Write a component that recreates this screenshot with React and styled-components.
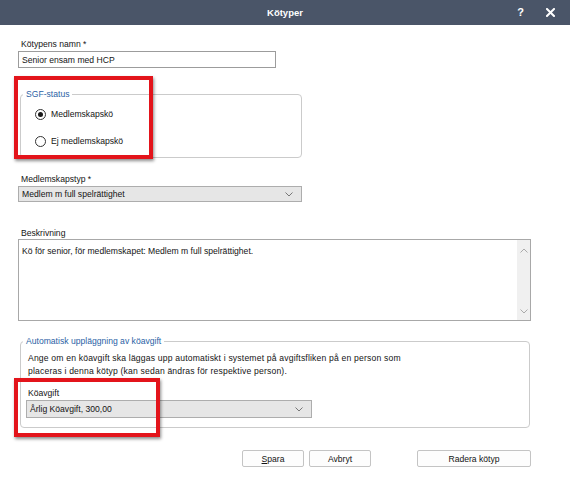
import React from "react";
import styled, { createGlobalStyle } from "styled-components";

const Global = createGlobalStyle`
  html, body { margin: 0; padding: 0; background: #ffffff; }
  body {
    font-family: "Liberation Sans", Arial, sans-serif;
    font-size: 8.6px;
    color: #141414;
  }
  * { box-sizing: border-box; }
`;

const Dialog = styled.div`
  position: relative;
  width: 570px;
  height: 487px;
  overflow: hidden;
  background: #ffffff;
`;

const TitleBar = styled.div`
  height: 25px;
  background: #4a5568;
  display: grid;
  grid-template-columns: 1fr auto 1fr;
  align-items: center;
  color: #ffffff;
`;

const Title = styled.div`
  grid-column: 2;
  font-weight: bold;
  font-size: 9.5px;
`;

const TitleActions = styled.div`
  grid-column: 3;
  display: flex;
  justify-content: flex-end;
  align-items: center;
  gap: 22px;
  padding-right: 15px;
`;

const Help = styled.span`
  font-weight: bold;
  font-size: 11px;
  line-height: 1;
`;

const Body = styled.div`
  padding: 13px 39px 0 18px;
  display: flex;
  flex-direction: column;
`;

const FieldLabel = styled.div`
  line-height: 12px;
  height: 12px;
  padding-left: ${(p) => p.$indent ?? 3}px;
  margin-top: ${(p) => p.$top ?? 0}px;
  margin-bottom: ${(p) => p.$bottom ?? 1}px;
`;

const TextInput = styled.div`
  width: 258px;
  height: 17px;
  border: 1px solid #9c9c9c;
  padding: 0 3px;
  display: flex;
  align-items: center;
`;

const Group = styled.fieldset`
  margin: ${(p) => p.$top}px 0 0 2px;
  padding: 0;
  width: ${(p) => p.$width}px;
  height: ${(p) => p.$height}px;
  border: 1px solid #cbcbcb;
  border-radius: 4px;
  min-width: 0;
`;

const Legend = styled.legend`
  margin-left: 2px;
  padding: 0 3px;
  line-height: 12px;
  color: #2b5fa5;
`;

const RadioList = styled.div`
  display: flex;
  flex-direction: column;
  gap: 13px;
  padding: 7px 0 0 14px;
`;

const RadioRow = styled.label`
  display: flex;
  align-items: center;
  gap: 5px;
  height: 14px;
`;

const RadioDot = styled.span`
  width: 11px;
  height: 11px;
  border-radius: 50%;
  border: 1px solid #333333;
  background: #ffffff;
  display: flex;
  align-items: center;
  justify-content: center;
  &::after {
    content: "";
    width: 5px;
    height: 5px;
    border-radius: 50%;
    background: ${(p) => (p.$checked ? "#1a1a1a" : "transparent")};
  }
`;

const SelectBox = styled.div`
  width: ${(p) => p.$width}px;
  height: ${(p) => p.$height}px;
  background: #e6e6e6;
  border: 1px solid #adadad;
  display: flex;
  align-items: center;
  justify-content: space-between;
  padding: 0 8px 0 3px;
`;

const Chevron = ({ color = "#777" }) => (
  <svg width="8" height="5" viewBox="0 0 8 5">
    <path d="M0.5 0.5 L4 4 L7.5 0.5" fill="none" stroke={color} strokeWidth="1" />
  </svg>
);

const ChevronUp = ({ color = "#aaa" }) => (
  <svg width="8" height="5" viewBox="0 0 8 5">
    <path d="M0.5 4.5 L4 1 L7.5 4.5" fill="none" stroke={color} strokeWidth="1" />
  </svg>
);

const TextArea = styled.div`
  width: 513px;
  height: 82px;
  border: 1px solid #a8a8a8;
  display: flex;
`;

const TextAreaText = styled.div`
  flex: 1;
  padding: 5px 3px;
  line-height: 12px;
`;

const ScrollTrack = styled.div`
  width: 13px;
  background: #f0f0f0;
  display: flex;
  flex-direction: column;
  justify-content: space-between;
  align-items: center;
  padding: 8px 0 6px;
`;

const GroupInner = styled.div`
  padding: 5px 0 0 5px;
  display: flex;
  flex-direction: column;
`;

const Paragraph = styled.p`
  margin: 0 0 9px 2px;
  line-height: 13px;
  letter-spacing: 0.18px;
`;

const ButtonRow = styled.div`
  display: flex;
  justify-content: flex-end;
  margin-top: 22px;
`;

const Button = styled.button`
  width: ${(p) => p.$width}px;
  height: 17px;
  margin-left: ${(p) => p.$gap}px;
  background: #fdfdfd;
  border: 1px solid #c4c4c4;
  border-radius: 2px;
  font: inherit;
  color: #141414;
  padding: 0;
  u { text-decoration: underline; }
`;

const Annotation = styled.div`
  position: absolute;
  left: ${(p) => p.$x}px;
  top: ${(p) => p.$y}px;
  width: ${(p) => p.$w}px;
  height: ${(p) => p.$h}px;
  border: 4px solid #e3141b;
  box-shadow: 1px 2px 3px rgba(0, 0, 0, 0.45);
  pointer-events: none;
`;

export default function App() {
  return (
    <>
      <Global />
      <Dialog>
        <TitleBar>
          <Title>Kötyper</Title>
          <TitleActions>
            <Help>?</Help>
            <svg width="9" height="9" viewBox="0 0 9 9">
              <path d="M1 1 L8 8 M8 1 L1 8" stroke="#ffffff" strokeWidth="2" strokeLinecap="square" />
            </svg>
          </TitleActions>
        </TitleBar>
        <Body>
          <FieldLabel>Kötypens namn *</FieldLabel>
          <TextInput>Senior ensam med HCP</TextInput>

          <Group $top={20} $width={282} $height={70}>
            <Legend>SGF-status</Legend>
            <RadioList>
              <RadioRow>
                <RadioDot $checked />
                Medlemskapskö
              </RadioRow>
              <RadioRow>
                <RadioDot />
                Ej medlemskapskö
              </RadioRow>
            </RadioList>
          </Group>

          <FieldLabel $top={15}>Medlemskapstyp *</FieldLabel>
          <SelectBox $width={284} $height={16}>
            <span>Medlem m full spelrättighet</span>
            <Chevron />
          </SelectBox>

          <FieldLabel $top={25} $bottom={0}>Beskrivning</FieldLabel>
          <TextArea>
            <TextAreaText>Kö för senior, för medlemskapet: Medlem m full spelrättighet.</TextAreaText>
            <ScrollTrack>
              <ChevronUp />
              <Chevron color="#aaa" />
            </ScrollTrack>
          </TextArea>

          <Group $top={14} $width={510} $height={93}>
            <Legend>Automatisk uppläggning av köavgift</Legend>
            <GroupInner>
              <Paragraph>
                Ange om en köavgift ska läggas upp automatiskt i systemet på avgiftsfliken på en person som
                <br />
                placeras i denna kötyp (kan sedan ändras för respektive person).
              </Paragraph>
              <FieldLabel $indent={2}>Köavgift</FieldLabel>
              <SelectBox $width={286} $height={18}>
                <span>Årlig Köavgift, 300,00</span>
                <Chevron />
              </SelectBox>
            </GroupInner>
          </Group>

          <ButtonRow>
            <Button $width={62} $gap={0}>
              <u>S</u>para
            </Button>
            <Button $width={62} $gap={5}>Avbryt</Button>
            <Button $width={114} $gap={46}>Radera kötyp</Button>
          </ButtonRow>
        </Body>

        <Annotation $x={14} $y={76} $w={139} $h={83} />
        <Annotation $x={14} $y={378} $w={146} $h={59} />
      </Dialog>
    </>
  );
}
